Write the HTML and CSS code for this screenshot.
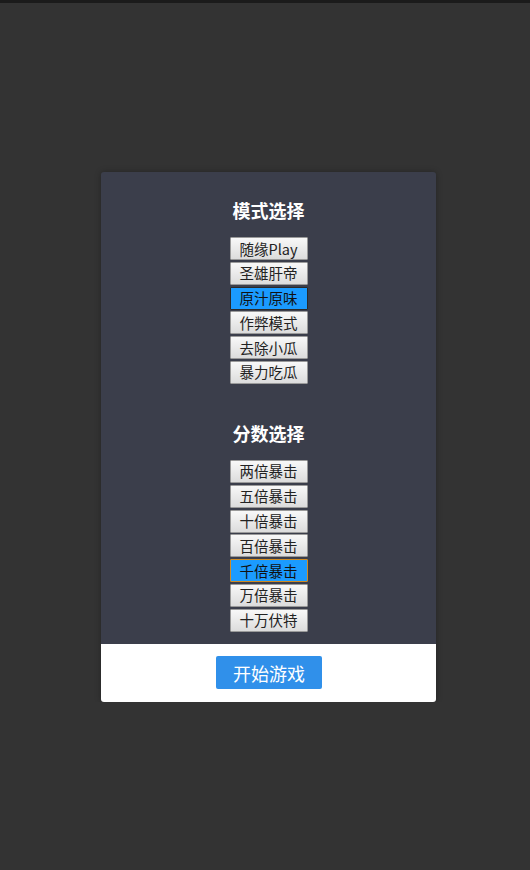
FILE: index.html
```html
<!DOCTYPE html>
<html lang="zh">
<head>
<meta charset="utf-8">
<title>模式选择</title>
<link rel="stylesheet" href="styles.css">
</head>
<body>
<div class="topbar"></div>
<div class="card">
  <div class="panel">
    <h2 class="title">模式选择</h2>
    <div class="options">
      <button class="opt">随缘Play</button>
      <button class="opt">圣雄肝帝</button>
      <button class="opt active">原汁原味</button>
      <button class="opt">作弊模式</button>
      <button class="opt">去除小瓜</button>
      <button class="opt">暴力吃瓜</button>
    </div>
    <h2 class="title second">分数选择</h2>
    <div class="options">
      <button class="opt">两倍暴击</button>
      <button class="opt">五倍暴击</button>
      <button class="opt">十倍暴击</button>
      <button class="opt">百倍暴击</button>
      <button class="opt active focus">千倍暴击</button>
      <button class="opt">万倍暴击</button>
      <button class="opt">十万伏特</button>
    </div>
  </div>
  <div class="footer">
    <button class="start">开始游戏</button>
  </div>
</div>
</body>
</html>
```

FILE: styles.css
```css
html, body {
  margin: 0;
  padding: 0;
  background: #333333;
  font-family: "Noto Sans CJK SC", "Noto Sans", sans-serif;
}
.topbar {
  height: 3px;
  background: #1b1b1b;
}
.card {
  width: 335px;
  margin: 169px 0 0 101px;
  border-radius: 3px;
  overflow: hidden;
  box-shadow: 0 0 6px rgba(0,0,0,0.3);
}
.panel {
  background: #3b3e4b;
  padding: 26px 0 12px;
  display: flex;
  flex-direction: column;
  align-items: center;
}
.title {
  margin: 0;
  color: #ffffff;
  font-size: 18px;
  font-weight: bold;
  line-height: 24px;
}
.title.second {
  margin-top: 37px;
}
.options {
  margin-top: 15px;
  display: flex;
  flex-direction: column;
  gap: 1.8px;
  align-items: center;
}
.opt {
  width: 78px;
  height: 23px;
  padding: 0;
  font-family: "Noto Sans CJK SC", sans-serif;
  font-size: 14.5px;
  line-height: 20px;
  color: #222;
  background: linear-gradient(#f8f8f8, #dcdcdc);
  border: 1px solid #9a9a9a;
  border-radius: 1px;
}
.opt.active {
  background: #1b9bff;
  border-color: #2a2a2a;
  color: #111;
}
.opt.focus {
  border-color: #d18b22;
}
.footer {
  background: #ffffff;
  height: 58px;
  display: flex;
  align-items: center;
  justify-content: center;
}
.start {
  width: 106px;
  height: 33px;
  padding: 0;
  border: none;
  border-radius: 2px;
  background: #3090ea;
  color: #ffffff;
  font-family: "Noto Sans CJK SC", sans-serif;
  font-size: 18px;
  margin-left: 1px;
}
```
